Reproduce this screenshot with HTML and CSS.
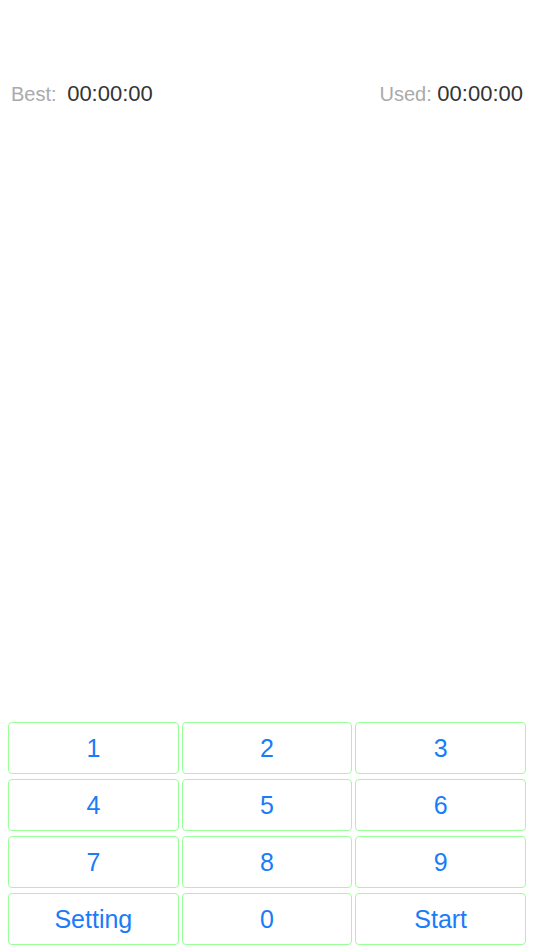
FILE: index.html
```html
<!DOCTYPE html>
<html lang="en">
<head>
    <meta charset="UTF-8">
    <meta name="viewport" content="width=device-width, initial-scale=1.0">
    <title>Timer</title>
    <link rel="stylesheet" href="styles.css">
</head>
<body>
<div class="screen">
    <!-- Best / Used times -->
    <div class="times">
        <div class="time-item">
            <span class="label best-label">Best:</span>
            <span class="value">00:00:00</span>
        </div>
        <div class="time-item">
            <span class="label used-label">Used:</span>
            <span class="value">00:00:00</span>
        </div>
    </div>

    <div class="board"></div>

    <!-- Keypad -->
    <div class="keypad">
        <button class="key">1</button>
        <button class="key">2</button>
        <button class="key">3</button>
        <button class="key">4</button>
        <button class="key">5</button>
        <button class="key">6</button>
        <button class="key">7</button>
        <button class="key">8</button>
        <button class="key">9</button>
        <button class="key">Setting</button>
        <button class="key">0</button>
        <button class="key">Start</button>
    </div>
</div>
</body>
</html>
```

FILE: styles.css
```css
body {
    margin: 0;
    font-family: "Liberation Sans", Arial, sans-serif;
    background: #fff;
}
.screen {
    height: 950px;
    display: flex;
    flex-direction: column;
}
.times {
    display: flex;
    justify-content: space-between;
    padding: 82px 11px 0 11px;
    font-size: 20px;
    line-height: 24px;
}
.label {
    color: #aaaaaa;
}
.best-label {
    margin-right: 5px;
}
.used-label {
    margin-right: 0;
}
.value {
    color: #333333;
    font-size: 22px;
}
.board {
    flex: 1;
}
.keypad {
    display: grid;
    grid-template-columns: repeat(3, 1fr);
    grid-auto-rows: 52px;
    gap: 5px 3px;
    padding: 0 8px 5px 8px;
}
.key {
    border: 1px solid #99ff99;
    border-radius: 4px;
    background: #fff;
    color: #1a7cf8;
    font-family: "Liberation Sans", Arial, sans-serif;
    font-size: 25px;
    padding: 0;
}
```
